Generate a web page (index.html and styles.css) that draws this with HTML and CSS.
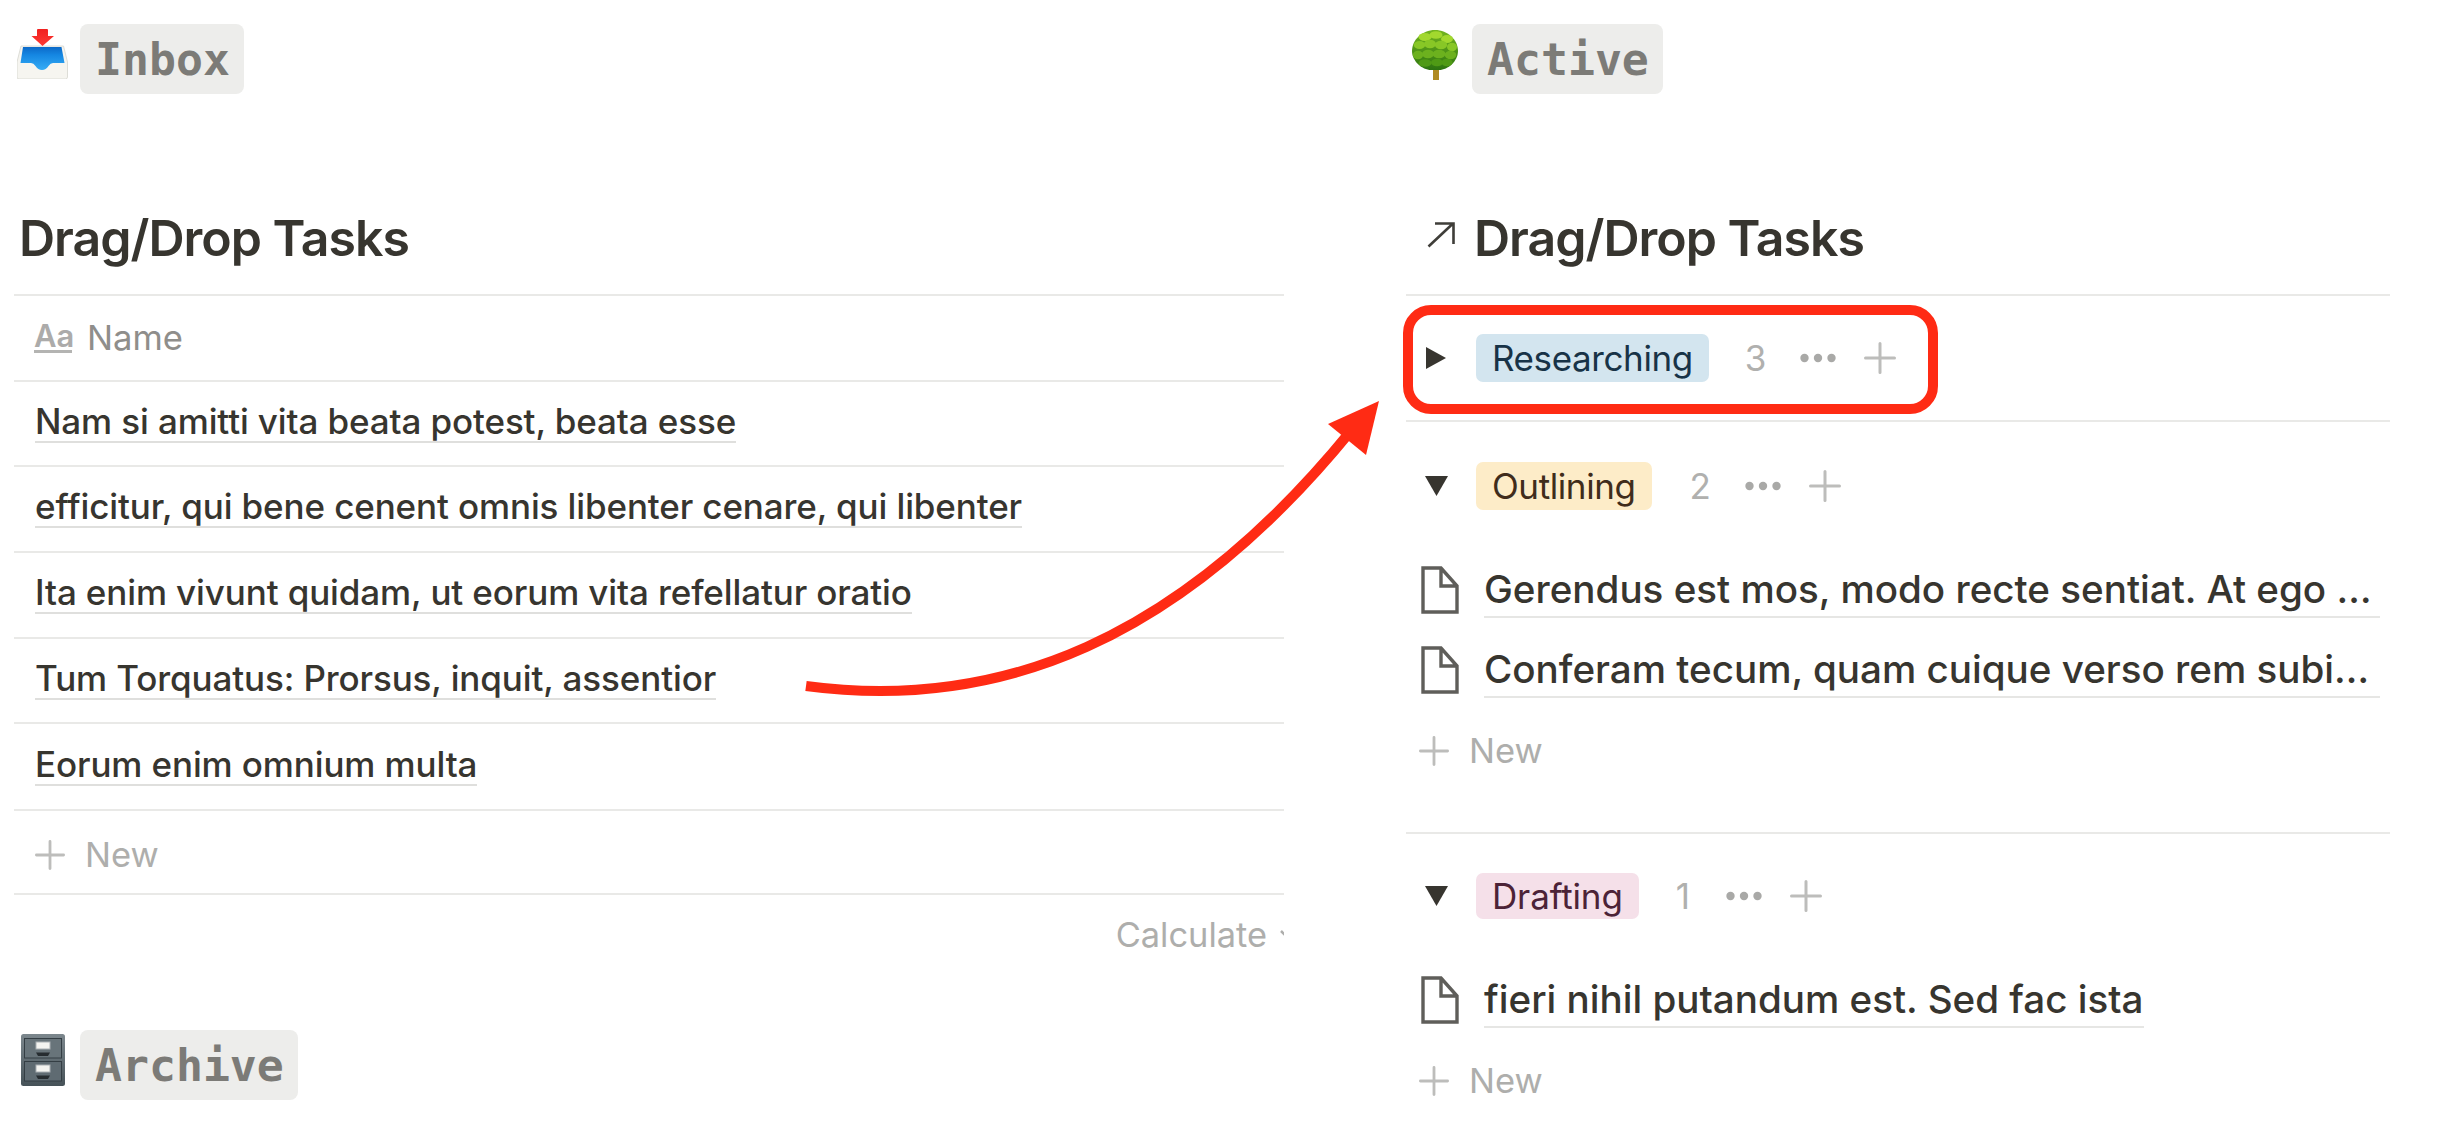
FILE: index.html
```html
<!DOCTYPE html>
<html lang="en">
<head>
<meta charset="utf-8">
<title>Drag/Drop Tasks</title>
<link rel="stylesheet" href="styles.css">
</head>
<body>
<svg width="0" height="0" class="defs">
  <defs>
    <symbol id="plus" viewBox="0 0 32 32"><path d="M16 1.5V30.5M1.5 16H30.5" fill="none" stroke="currentColor" stroke-width="3" stroke-linecap="round"/></symbol>
    <symbol id="dots" viewBox="0 0 36 10"><circle cx="4.5" cy="5" r="4.2"/><circle cx="18" cy="5" r="4.2"/><circle cx="31.5" cy="5" r="4.2"/></symbol>
    <symbol id="doc" viewBox="0 0 38 48"><path d="M2 2H20L36 20V46H2Z M20 2V20H36" fill="#fff" stroke="#5f5e5a" stroke-width="3.4"/></symbol>
    <symbol id="tri-down" viewBox="0 0 23 20"><path d="M0 0H23L11.5 20Z"/></symbol>
    <linearGradient id="leaf" x1="0" y1="0" x2="0" y2="1"><stop offset="0" stop-color="#74b620"/><stop offset="1" stop-color="#2c7410"/></linearGradient>
    <linearGradient id="tray" x1="0" y1="0" x2="0" y2="1"><stop offset="0" stop-color="#0c69c8"/><stop offset=".35" stop-color="#1587e2"/><stop offset="1" stop-color="#36acf5"/></linearGradient>
    <linearGradient id="steel" x1="0" y1="0" x2="0" y2="1"><stop offset="0" stop-color="#7c878d"/><stop offset="1" stop-color="#465258"/></linearGradient>
    <linearGradient id="red" x1="0" y1="0" x2="0" y2="1"><stop offset="0" stop-color="#f0201f"/><stop offset="1" stop-color="#ff3a33"/></linearGradient>
  </defs>
</svg>
<main class="board">
  <section class="col col-left">
    <header class="heading">
      <span class="emoji">
        <svg class="emoji-inbox" width="51" height="51" viewBox="0 0 51 51">
          <path d="M4 18H46.500L50.500 34V49Q50.500 51 48.500 51H2Q0 51 0 49V34Z" fill="#f6f5f0" stroke="#d6d5ce" stroke-width=".8"/>
          <path d="M6 19H44.500L47.500 35H36Q33.500 35 31.500 38Q29 42 25 42Q21 42 18.500 38Q16.500 35 14 35H3.500Z" fill="url(#tray)"/>
          <path d="M21 1H30Q31 1 31 2V8H37L25.500 18L14.500 8H20V2Q20 1 21 1Z" fill="url(#red)"/>
        </svg>
      </span>
      <code class="tag">Inbox</code>
    </header>
    <div class="title-wrap"><h2 class="title">Drag/Drop Tasks</h2></div>
    <div class="table">
      <div class="row row-head"><span class="aa">Aa</span><span class="head-name">Name</span></div>
      <div class="row"><span class="cell">Nam si amitti vita beata potest, beata esse</span></div>
      <div class="row"><span class="cell">efficitur, qui bene cenent omnis libenter cenare, qui libenter</span></div>
      <div class="row"><span class="cell">Ita enim vivunt quidam, ut eorum vita refellatur oratio</span></div>
      <div class="row"><span class="cell">Tum Torquatus: Prorsus, inquit, assentior</span></div>
      <div class="row row-last"><span class="cell">Eorum enim omnium multa</span></div>
      <div class="row row-new"><svg class="ic-plus" width="30" height="32"><use href="#plus"/></svg><span class="new-label">New</span></div>
    </div>
    <div class="calc"><span class="calc-label">Calculate</span><svg class="calc-chev" width="16" height="10" viewBox="0 0 16 10"><path d="M1 1L8 8L15 1" fill="none" stroke="#aeaeac" stroke-width="2.500"/></svg></div>
    <header class="heading">
      <span class="emoji">
        <svg class="emoji-cabinet" width="44" height="52" viewBox="0 0 44 52">
          <rect width="44" height="52" rx="2.500" fill="url(#steel)"/>
          <rect x="3.500" y="4.500" width="37" height="19.500" fill="#68747a" stroke="#343e44" stroke-width="1"/>
          <rect x="3.500" y="27.500" width="37" height="19.500" fill="#5f6b72" stroke="#343e44" stroke-width="1"/>
          <rect x="15" y="8" width="14" height="7" fill="#f4f4f1" stroke="#aab0b3" stroke-width="1"/>
          <rect x="15" y="31" width="14" height="7" fill="#f4f4f1" stroke="#aab0b3" stroke-width="1"/>
          <path d="M15 18.500H29L27 22H17Z" fill="#262c30"/>
          <path d="M15 41.500H29L27 45H17Z" fill="#262c30"/>
        </svg>
      </span>
      <code class="tag">Archive</code>
    </header>
  </section>

  <section class="col col-right">
    <header class="heading">
      <span class="emoji">
        <svg class="emoji-tree" width="47" height="52" viewBox="0 0 47 52">
          <path d="M21 40H27V52H21Z" fill="#b08a22"/>
          <path d="M23 2C36 2 46 12 46 23C46 33 36 42 27 42H19C10 42 0 33 0 23C0 12 10 2 23 2Z" fill="url(#leaf)"/>
          <g fill="#a2d82e">
            <ellipse cx="13" cy="9" rx="6.500" ry="4"/><ellipse cx="24" cy="7" rx="6.500" ry="3.800"/><ellipse cx="35" cy="11" rx="6" ry="4"/>
          </g>
          <g fill="#88c726">
            <ellipse cx="7.500" cy="17" rx="5.800" ry="4"/><ellipse cx="18" cy="16" rx="6" ry="4.200"/><ellipse cx="29" cy="17" rx="6.200" ry="4.200"/><ellipse cx="40" cy="19" rx="5" ry="4.200"/>
          </g>
          <g fill="#6cb11e">
            <ellipse cx="6" cy="27" rx="5.200" ry="4.200"/><ellipse cx="16" cy="26" rx="6" ry="4.200"/><ellipse cx="27" cy="26" rx="6.500" ry="4.200"/><ellipse cx="38.500" cy="27" rx="5.800" ry="4.200"/>
          </g>
          <g fill="#4f9a15">
            <ellipse cx="13" cy="35" rx="6.500" ry="3.800"/><ellipse cx="25" cy="34.500" rx="6" ry="3.800"/><ellipse cx="35" cy="34.500" rx="5.500" ry="3.800"/>
          </g>
        </svg>
      </span>
      <code class="tag">Active</code>
    </header>
    <div class="title-wrap title-wrap-linked">
      <svg class="ic-link" width="28" height="26" viewBox="0 0 28 26"><path d="M1.500 24.500L26 1.500M8 1.500H26.500V22" fill="none" stroke="#3f3e39" stroke-width="2.600"/></svg>
      <h2 class="title">Drag/Drop Tasks</h2>
    </div>
    <div class="table">
      <div class="group group-closed">
        <div class="group-head">
          <span class="toggle"><svg width="20" height="22" viewBox="0 0 20 22"><path d="M0 0L20 11L0 22Z"/></svg></span>
          <span class="chip chip-blue">Researching</span>
          <span class="count">3</span>
          <svg class="dots" width="36" height="10"><use href="#dots"/></svg>
          <svg class="head-plus" width="32" height="32"><use href="#plus"/></svg>
        </div>
      </div>
      <div class="group">
        <div class="group-head">
          <span class="toggle"><svg width="23" height="20"><use href="#tri-down"/></svg></span>
          <span class="chip chip-yellow">Outlining</span>
          <span class="count">2</span>
          <svg class="dots" width="36" height="10"><use href="#dots"/></svg>
          <svg class="head-plus" width="32" height="32"><use href="#plus"/></svg>
        </div>
        <div class="items">
          <div class="item"><svg class="ic-doc" width="38" height="48"><use href="#doc"/></svg><span class="item-text item-wide">Gerendus est mos, modo recte sentiat. At ego …</span></div>
          <div class="item"><svg class="ic-doc" width="38" height="48"><use href="#doc"/></svg><span class="item-text item-wide">Conferam tecum, quam cuique verso rem subi…</span></div>
        </div>
        <div class="group-new"><svg class="ic-plus" width="30" height="32"><use href="#plus"/></svg><span class="new-label">New</span></div>
      </div>
      <div class="group group-last">
        <div class="group-head">
          <span class="toggle"><svg width="23" height="20"><use href="#tri-down"/></svg></span>
          <span class="chip chip-pink">Drafting</span>
          <span class="count">1</span>
          <svg class="dots" width="36" height="10"><use href="#dots"/></svg>
          <svg class="head-plus" width="32" height="32"><use href="#plus"/></svg>
        </div>
        <div class="items">
          <div class="item"><svg class="ic-doc" width="38" height="48"><use href="#doc"/></svg><span class="item-text">fieri nihil putandum est. Sed fac ista</span></div>
        </div>
        <div class="group-new"><svg class="ic-plus" width="30" height="32"><use href="#plus"/></svg><span class="new-label">New</span></div>
      </div>
    </div>
  </section>

  <svg class="overlay" width="2438" height="1140" viewBox="0 0 2438 1140">
    <rect x="1408" y="310" width="525" height="99" rx="23" fill="none" stroke="#ff2b14" stroke-width="10"/>
    <path d="M806 686C1000 712 1180 640 1350 432" fill="none" stroke="#ff2b14" stroke-width="10"/>
    <path d="M1379 401L1328 424L1366 455Z" fill="#ff2b14"/>
  </svg>
</main>
</body>
</html>
```
FILE: styles.css
```css
* { box-sizing: border-box; }
html, body { margin: 0; padding: 0; background: #fff; }
body { width: 2438px; height: 1140px; overflow: hidden; font-family: Inter, "Liberation Sans", sans-serif; color: #37352f; }
.defs { position: absolute; }
.board { position: relative; display: flex; width: 2438px; height: 1140px; }
.col { padding-top: 24px; }
.col-left { margin-left: 14px; width: 1270px; }
.col-right { margin-left: 122px; width: 984px; }
.overlay { position: absolute; left: 0; top: 0; pointer-events: none; }

.heading { display: flex; height: 70px; }
.emoji { width: 66px; padding-top: 4px; flex: none; }
.emoji svg { display: block; }
.emoji-inbox { margin-left: 3px; }
.emoji-tree { margin-left: 6px; }
.emoji-cabinet { margin-left: 7px; }
.tag { display: flex; align-items: center; height: 70px; padding: 0 14px 0 15px; border-radius: 8px; background: #ededeb; color: #7c7b77; font-family: "DejaVu Sans Mono", monospace; font-weight: 700; font-size: 44.800px; }

.title-wrap { display: flex; align-items: flex-end; height: 200px; padding: 0 0 26px 5px; }
.title-wrap-linked { padding-left: 0; }
.ic-link { flex: none; margin: 0 19px 20px 21px; }
.title { margin: 0; font-size: 50px; line-height: 60px; font-weight: 600; letter-spacing: -1px; color: #37352f; }

.table { border-top: 2px solid #e9e9e7; }
.row { display: flex; align-items: flex-start; height: 85.700px; padding-left: 21px; border-bottom: 2px solid #e9e9e7; }
.row-last { height: 87px; }
.cell { margin-top: 20px; font-size: 35px; line-height: 39px; font-weight: 500; letter-spacing: -0.120px; border-bottom: 2px solid #dfdfdd; white-space: nowrap; }
.row-last .cell { margin-top: 21px; }
.row-head { align-items: center; padding-left: 20px; }
.aa { width: 38px; height: 30px; margin-right: 15px; color: #acabaa; font-size: 31px; line-height: 26px; font-weight: 600; text-align: center; border-bottom: 3.500px solid #b4b4b2; }
.head-name { margin-bottom: 2px; font-size: 34.600px; line-height: 40px; color: #8f8e8b; }
.row-new { align-items: center; height: 84px; padding-top: 6px; }
.ic-plus { flex: none; color: #bdbdbb; }
.new-label { margin-left: 20px; color: #aeaeac; font-size: 34.500px; line-height: 40px; }

.calc { display: flex; justify-content: flex-end; align-items: center; height: 135px; padding-bottom: 55px; overflow: hidden; }
.calc-label { margin-right: 13px; color: #aeaeac; font-size: 34.400px; line-height: 40px; }
.calc-chev { flex: none; margin-right: -12px; }

.group { border-bottom: 2px solid #e9e9e7; padding: 40px 0; }
.group-closed { padding: 38px 0; }
.group-last { border-bottom: 0; padding: 39px 0 0; }
.group-head { display: flex; align-items: center; height: 48px; }
.group-last .group-head { height: 46px; }
.toggle { display: flex; justify-content: center; width: 60px; margin-right: 10px; flex: none; color: #37352f; fill: #37352f; }
.toggle svg { display: block; }
.chip { display: flex; align-items: center; height: 48px; padding: 0 16px; border-radius: 7px; font-size: 35px; line-height: 44px; letter-spacing: -0.400px; }
.chip-blue { background: #d3e5ef; color: #183347; }
.chip-yellow { background: #fdecc8; color: #402c1b; }
.chip-pink { height: 46px; background: #f5e0e9; color: #4c2337; letter-spacing: -0.150px; }
.count { margin-left: 36px; color: #b0b0ae; font-size: 35px; line-height: 44px; }
.chip-yellow + .count { margin-left: 38px; }
.chip-pink + .count { margin-left: 37px; }
.dots { margin-left: 34px; fill: #a9a9a7; }
.group-last .dots { margin-left: 36px; }
.head-plus { margin-left: 28px; color: #bdbdbb; }

.items { margin-top: 40px; }
.group-last .items { margin-top: 41px; }
.item { display: flex; align-items: flex-start; height: 80px; padding-left: 15px; }
.ic-doc { flex: none; margin: 16px 25px 0 0; }
.item-text { margin-top: 16px; padding-bottom: 4px; font-size: 38.600px; line-height: 46px; font-weight: 500; border-bottom: 2px solid #e6e6e4; white-space: nowrap; }
.item-wide { width: 896px; }
.group-new { display: flex; align-items: center; height: 82px; padding-left: 13px; }
```
